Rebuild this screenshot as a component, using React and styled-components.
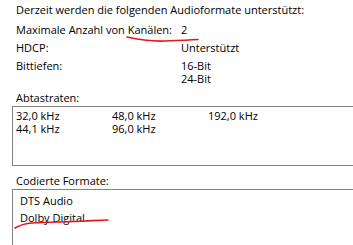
import styled, { createGlobalStyle } from 'styled-components'

const GlobalStyle = createGlobalStyle`
  html, body {
    margin: 0;
    padding: 0;
    background: #ffffff;
    overflow: hidden;
  }
  body {
    font-family: "Open Sans", "Noto Sans", sans-serif;
    font-size: 11px;
    color: #000000;
  }
`

const Page = styled.div`
  position: relative;
  width: 353px;
  height: 245px;
  overflow: hidden;
  display: flex;
  flex-direction: column;
`

const Intro = styled.div`
  padding: 2px 0 0 16px;
  line-height: 16px;
  white-space: nowrap;
`

const InfoTable = styled.div`
  display: grid;
  grid-template-columns: 165px 1fr;
  padding: 3px 0 0 16px;
  line-height: 18px;
  white-space: nowrap;
`

const Values = styled.div`
  display: flex;
  flex-direction: column;
  line-height: 13px;
  padding-top: 2px;
`

const SectionLabel = styled.div`
  padding-left: 16px;
  margin-top: ${p => p.$top}px;
  line-height: 16px;
`

const ListBox = styled.div`
  margin-left: 12px;
  width: 360px;
  height: ${p => p.$height}px;
  flex-shrink: 0;
  box-sizing: border-box;
  border: 1px solid #838383;
  border-right: none;
  padding: ${p => p.$pad};
`

const RateGrid = styled.div`
  display: grid;
  grid-template-columns: repeat(3, 96px);
  line-height: 13px;
`

const FormatList = styled.div`
  display: flex;
  flex-direction: column;
  line-height: 17px;
`

const Scribble = styled.svg`
  position: absolute;
  left: 0;
  top: 0;
  pointer-events: none;
`

const rates = ['32,0 kHz', '48,0 kHz', '192,0 kHz', '44,1 kHz', '96,0 kHz']

export default function App() {
  return (
    <>
      <GlobalStyle />
      <Page>
        <Intro>Derzeit werden die folgenden Audioformate unterstützt:</Intro>
        <InfoTable>
          <div>Maximale Anzahl von Kanälen:</div>
          <div>2</div>
          <div>HDCP:</div>
          <div>Unterstützt</div>
          <div>Bittiefen:</div>
          <Values>
            <span>16-Bit</span>
            <span>24-Bit</span>
          </Values>
        </InfoTable>
        <SectionLabel $top={5}>Abtastraten:</SectionLabel>
        <ListBox $height={60} $pad="2px 0 0 3px">
          <RateGrid>
            {rates.map(r => <span key={r}>{r}</span>)}
          </RateGrid>
        </ListBox>
        <SectionLabel $top={7}>Codierte Formate:</SectionLabel>
        <ListBox $height={70} $pad="2px 0 0 7px">
          <FormatList>
            <span>DTS Audio</span>
            <span>Dolby Digital</span>
          </FormatList>
        </ListBox>
        <Scribble width="353" height="245" viewBox="0 0 353 245">
          <path d="M127 37 C140 40, 152 41.5, 165 41 C178 40.5, 190 40, 198 39.5" fill="none" stroke="#e8141c" strokeWidth="1.6" strokeLinecap="round" />
          <path d="M15 228 C20 225, 25 223.5, 32 223 C50 222, 70 222, 85 221 C95 220.5, 103 220, 108 220" fill="none" stroke="#e8141c" strokeWidth="1.6" strokeLinecap="round" />
        </Scribble>
      </Page>
    </>
  )
}
